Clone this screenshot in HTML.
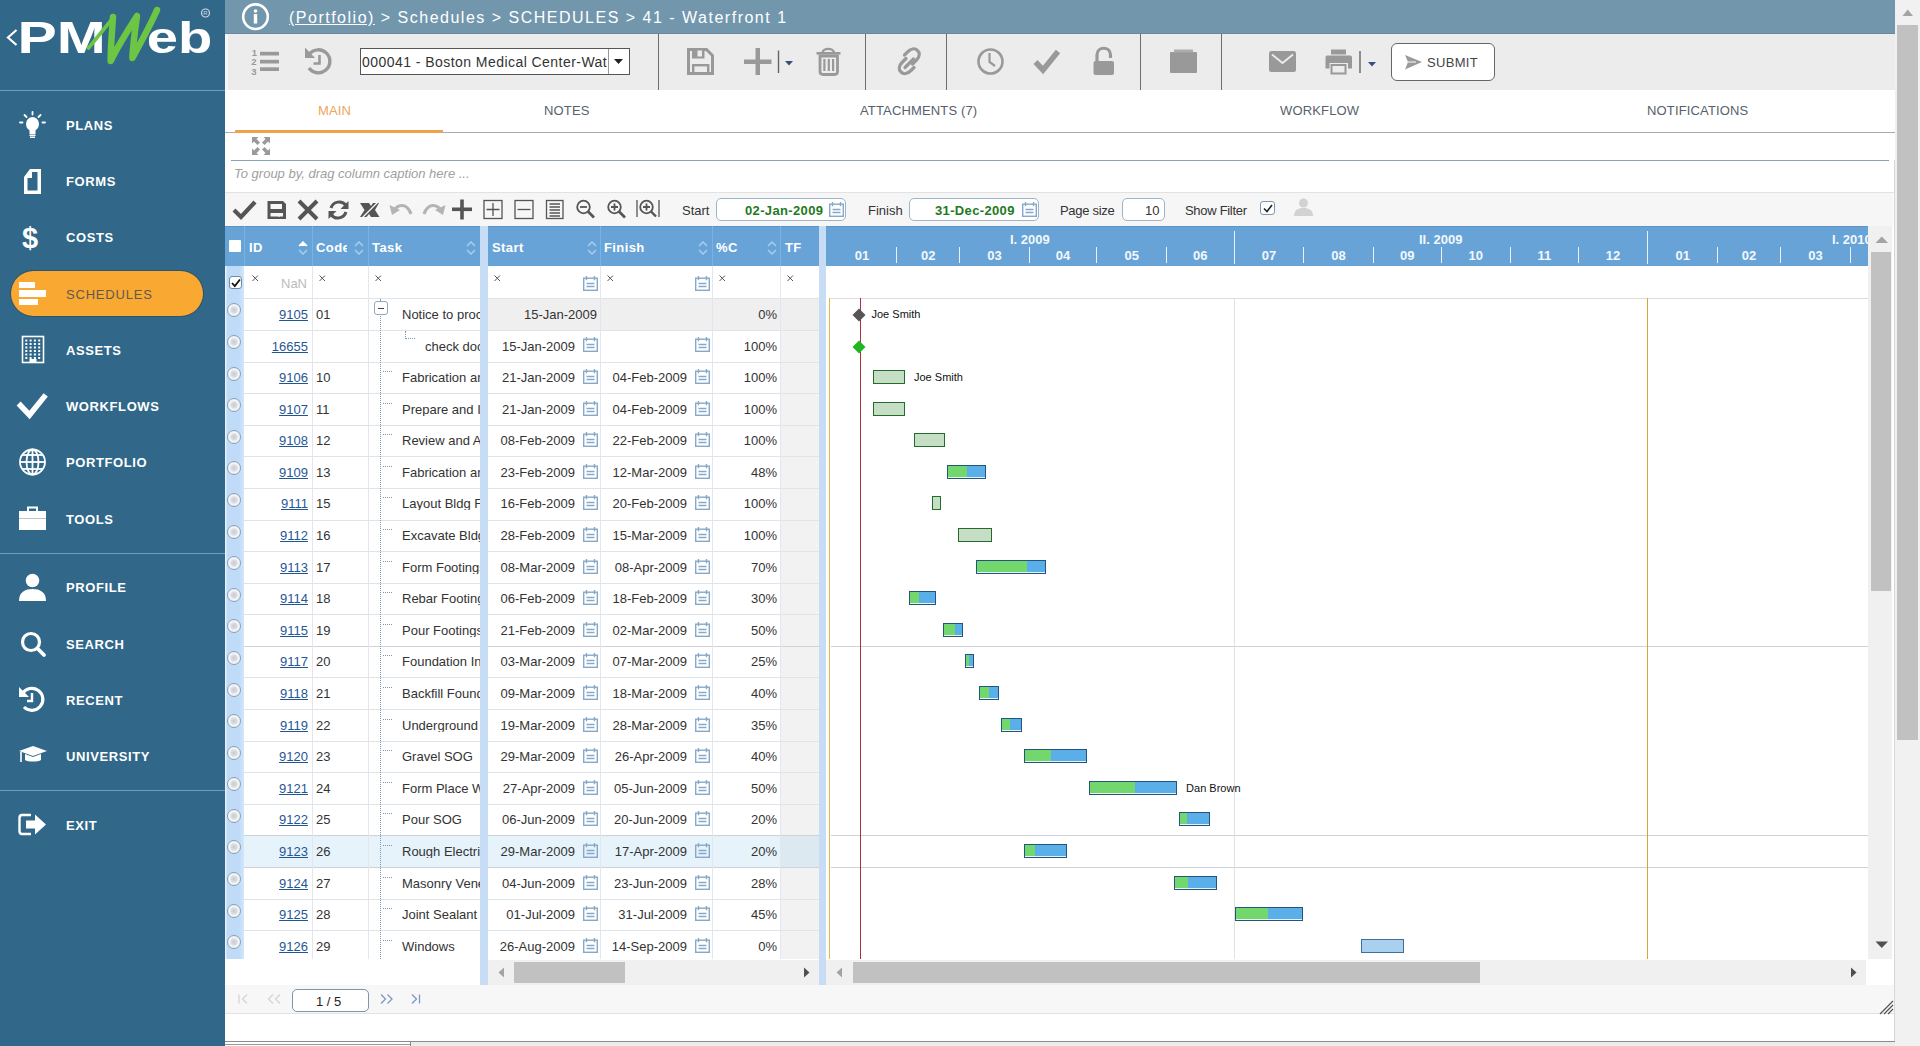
<!DOCTYPE html><html><head><meta charset="utf-8"><style>

*{box-sizing:border-box}
body{margin:0;width:1920px;height:1046px;overflow:hidden;position:relative;background:#fff;font-family:"Liberation Sans", sans-serif;}
.a{position:absolute}
.t{position:absolute;white-space:nowrap;line-height:1}
svg{position:absolute;overflow:visible}
.sbt{position:absolute;left:66px;color:#fff;font-size:13px;font-weight:bold;letter-spacing:0.6px;white-space:nowrap;line-height:1}
.tab{position:absolute;top:104px;font-size:13px;color:#56616c;letter-spacing:0.15px;white-space:nowrap;line-height:1}
.gt{position:absolute;font-size:13px;color:#333;white-space:nowrap;line-height:1}
.hd{position:absolute;top:241px;font-size:13px;color:#fff;font-weight:bold;letter-spacing:0.4px;white-space:nowrap;line-height:1}
.lnk{color:#1f5796;text-decoration:underline}

</style></head><body>
<div class="a" style="left:0;top:0;width:225px;height:1046px;background:#316789"></div>
<svg style="left:0;top:0" width="225" height="90" viewBox="0 0 225 90">
<path d="M16.5 30 L8 37.5 L16.5 45" fill="none" stroke="#fff" stroke-width="2.2"/>
<g fill="#fff">
<text x="0" y="0" transform="translate(17.4,52.7) scale(1.35,1)" font-family="Liberation Sans" font-weight="bold" font-size="43.6">PM</text>
<text x="0" y="0" transform="translate(146.8,52.7) scale(1.29,1.0)" font-family="Liberation Sans" font-weight="bold" font-size="43.5">eb</text>
</g>
<path d="M88.5 48 L113 18" fill="none" stroke="#6cc644" stroke-width="3.6" stroke-linecap="round"/>
<path d="M113 17 C112 32 110.5 48 110.7 61 C118 46 128 30 137 16 C135 30 133 45 132.4 58 C141 42 150 26 157 10" fill="none" stroke="#6cc644" stroke-width="6.5" stroke-linecap="round" stroke-linejoin="round"/>
<circle cx="205.5" cy="13" r="4" fill="none" stroke="#cfdde8" stroke-width="1.2"/>
<text x="203.3" y="15.3" font-size="6" fill="#cfdde8" font-family="Liberation Sans">R</text>
</svg>
<div class="a" style="left:0;top:90px;width:225px;height:1px;background:#6f9dbf"></div>
<div class="a" style="left:0;top:553px;width:225px;height:1px;background:#6f9dbf"></div>
<div class="a" style="left:0;top:790px;width:225px;height:1px;background:#6f9dbf"></div>
<div class="a" style="left:11px;top:271px;width:192px;height:45px;border-radius:23px;background:#f9a832;box-shadow:0 0 0 1px rgba(45,70,75,0.55)"></div>
<div class="sbt" style="top:119px;color:#fff">PLANS</div>
<div class="sbt" style="top:175px;color:#fff">FORMS</div>
<div class="sbt" style="top:231px;color:#fff">COSTS</div>
<div class="sbt" style="top:288px;color:#5e5a50;font-weight:normal;letter-spacing:0.8px">SCHEDULES</div>
<div class="sbt" style="top:344px;color:#fff">ASSETS</div>
<div class="sbt" style="top:400px;color:#fff">WORKFLOWS</div>
<div class="sbt" style="top:456px;color:#fff">PORTFOLIO</div>
<div class="sbt" style="top:513px;color:#fff">TOOLS</div>
<div class="sbt" style="top:581px;color:#fff">PROFILE</div>
<div class="sbt" style="top:638px;color:#fff">SEARCH</div>
<div class="sbt" style="top:694px;color:#fff">RECENT</div>
<div class="sbt" style="top:750px;color:#fff">UNIVERSITY</div>
<div class="sbt" style="top:819px;color:#fff">EXIT</div>
<svg style="left:0;top:0" width="60" height="860">
<!-- plans bulb -->
<g fill="#fff">
<ellipse cx="32.5" cy="124" rx="6.5" ry="7"/>
<rect x="29.5" y="129" width="6" height="5"/>
<rect x="29.5" y="134.5" width="6" height="1.5"/>
<rect x="30" y="136.5" width="5" height="1.5"/>
</g>
<g stroke="#fff" stroke-width="1.8" stroke-linecap="round">
<line x1="32.5" y1="112" x2="32.5" y2="114.5"/><line x1="24.5" y1="115" x2="26.5" y2="117"/><line x1="40.5" y1="115" x2="38.5" y2="117"/>
<line x1="20" y1="122.5" x2="22.5" y2="122.5"/><line x1="42.5" y1="122.5" x2="45" y2="122.5"/>
</g>
<!-- forms -->
<path d="M24 177 L30 169 L41 169 L41 194 L24 194 Z M27.5 178 L27.5 190.5 L37.5 190.5 L37.5 172 L32 172 L32 178 Z" fill="#fff" fill-rule="evenodd"/>
<!-- costs $ -->
<text x="22" y="248" font-family="Liberation Sans" font-weight="bold" font-size="29" fill="#fff">$</text>
<!-- schedules -->
<rect x="19" y="282" width="16" height="6" fill="#fff"/>
<rect x="19" y="290" width="27" height="7" fill="#fff"/>
<rect x="19" y="299" width="19" height="6" fill="#fff"/>
<!-- assets building -->
<rect x="22.5" y="336.5" width="21" height="26" fill="none" stroke="#fff" stroke-width="1.6"/>
<g fill="#fff">

<rect x="25.3" y="339.5" width="2" height="2"/>
<rect x="29.6" y="339.5" width="2" height="2"/>
<rect x="33.9" y="339.5" width="2" height="2"/>
<rect x="38.2" y="339.5" width="2" height="2"/>
<rect x="25.3" y="343.0" width="2" height="2"/>
<rect x="29.6" y="343.0" width="2" height="2"/>
<rect x="33.9" y="343.0" width="2" height="2"/>
<rect x="38.2" y="343.0" width="2" height="2"/>
<rect x="25.3" y="346.5" width="2" height="2"/>
<rect x="29.6" y="346.5" width="2" height="2"/>
<rect x="33.9" y="346.5" width="2" height="2"/>
<rect x="38.2" y="346.5" width="2" height="2"/>
<rect x="25.3" y="350.0" width="2" height="2"/>
<rect x="29.6" y="350.0" width="2" height="2"/>
<rect x="33.9" y="350.0" width="2" height="2"/>
<rect x="38.2" y="350.0" width="2" height="2"/>
<rect x="25.3" y="353.5" width="2" height="2"/>
<rect x="29.6" y="353.5" width="2" height="2"/>
<rect x="33.9" y="353.5" width="2" height="2"/>
<rect x="38.2" y="353.5" width="2" height="2"/>
<rect x="25.3" y="357.0" width="2" height="2"/>
<rect x="29.6" y="357.0" width="2" height="2"/>
<rect x="33.9" y="357.0" width="2" height="2"/>
<rect x="38.2" y="357.0" width="2" height="2"/>
<rect x="29.5" y="359" width="7" height="4"/>
</g>
<!-- workflows check -->
<path d="M20.5 405.5 L29.5 415 L44 397" fill="none" stroke="#fff" stroke-width="5.5" stroke-linecap="square"/>
<!-- portfolio globe -->
<g fill="none" stroke="#fff" stroke-width="1.8">
<circle cx="32.5" cy="462" r="12.5"/>
<ellipse cx="32.5" cy="462" rx="6" ry="12.5"/>
<line x1="32.5" y1="449.5" x2="32.5" y2="474.5"/>
<line x1="20" y1="462" x2="45" y2="462"/>
<line x1="22" y1="455" x2="43" y2="455"/>
<line x1="22" y1="469" x2="43" y2="469"/>
</g>
<!-- tools briefcase -->
<path d="M28 511 V507.5 H37 V511" fill="none" stroke="#fff" stroke-width="2"/>
<rect x="19" y="511" width="27" height="19" fill="#fff"/>
<rect x="19" y="518" width="27" height="1" fill="#b9c6d0"/>
<!-- profile -->
<circle cx="32.5" cy="580.5" r="6.8" fill="#fff"/>
<path d="M19 601 C19 592 25 589 32.5 589 C40 589 46 592 46 601 Z" fill="#fff"/>
<!-- search -->
<circle cx="31" cy="642" r="8.5" fill="none" stroke="#fff" stroke-width="3.2"/>
<line x1="37.5" y1="648.5" x2="44" y2="655" stroke="#fff" stroke-width="3.8" stroke-linecap="round"/>
<!-- recent -->
<path d="M22.5 693.5 A11 11 0 1 1 24 707" fill="none" stroke="#fff" stroke-width="3.2"/>
<path d="M19 687 L19 697 L29 697 Z" fill="#fff"/>
<path d="M32 693 V701 H27" fill="none" stroke="#fff" stroke-width="2.4"/>
<!-- university cap -->
<path d="M19 751 L33 746 L47 751 L33 756 Z" fill="#fff"/>
<path d="M25 754 V760 C28 762 38 762 41 760 V754 L33 757 Z" fill="#fff"/>
<line x1="21" y1="752" x2="21" y2="762" stroke="#fff" stroke-width="1.6"/>
<!-- exit -->
<path d="M31 815 H22 C20 815 19.5 816 19.5 818 V831 C19.5 833 20 834 22 834 H31" fill="none" stroke="#fff" stroke-width="2.4"/>
<path d="M26 820.5 H35 V814.5 L46 824.5 L35 834.5 V828.5 H26 Z" fill="#fff"/>
</svg>
<div class="a" style="left:225px;top:0;width:1670px;height:34px;background:#7297ad;border-bottom:1px solid #658a9f"></div>
<svg style="left:240px;top:2px" width="32" height="32"><circle cx="15.5" cy="14.7" r="12.3" fill="none" stroke="#fff" stroke-width="2.6"/><circle cx="15.5" cy="9" r="1.8" fill="#fff"/><rect x="13.8" y="12" width="3.4" height="9.5" fill="#fff"/></svg>
<div class="t" style="left:289px;top:10px;font-size:16px;color:#fff;letter-spacing:1.5px"><span style="text-decoration:underline">(Portfolio)</span> &gt; Schedules &gt; SCHEDULES &gt; 41 - Waterfront 1</div>
<div class="a" style="left:225px;top:34px;width:1670px;height:56px;background:#ececec"></div>
<div class="a" style="left:225px;top:34px;width:3px;height:56px;background:#f4f8fb"></div>
<div class="a" style="left:658px;top:34px;width:1px;height:56px;background:#6e6e6e"></div>
<div class="a" style="left:865px;top:34px;width:1px;height:56px;background:#6e6e6e"></div>
<div class="a" style="left:946px;top:34px;width:1px;height:56px;background:#6e6e6e"></div>
<div class="a" style="left:1140px;top:34px;width:1px;height:56px;background:#6e6e6e"></div>
<div class="a" style="left:1221px;top:34px;width:1px;height:56px;background:#6e6e6e"></div>
<div class="a" style="left:360px;top:48px;width:270px;height:27px;border:1px solid #555;background:#fff"></div>
<div class="a" style="left:608px;top:49px;width:1px;height:25px;background:#999"></div>
<svg style="left:613px;top:58px" width="12" height="8"><path d="M1 1 H10 L5.5 6 Z" fill="#222"/></svg>
<div class="t" style="left:362px;top:55px;font-size:14px;color:#333;letter-spacing:0.45px">000041 - Boston Medical Center-Wat</div>
<svg style="left:0;top:0" width="1500" height="90">
<!-- list 123 -->
<g fill="#999">
<rect x="260" y="51.8" width="19" height="3.7"/><rect x="260" y="59.8" width="19" height="3.7"/><rect x="260" y="67.3" width="19" height="3.7"/>
<text x="251.8" y="56.3" font-size="9.5" font-family="Liberation Sans" font-weight="bold">1</text>
<text x="251.3" y="65.2" font-size="9.5" font-family="Liberation Sans" font-weight="bold">2</text>
<text x="251.3" y="74.5" font-size="9.5" font-family="Liberation Sans" font-weight="bold">3</text>
</g>
<!-- history -->
<path d="M309.5 54 A11.5 11.5 0 1 1 309 68" fill="none" stroke="#999" stroke-width="3.4"/>
<path d="M305 47.5 L305 58 L315 58 Z" fill="#999"/>
<path d="M319.5 55 V63.5 H313.5" fill="none" stroke="#999" stroke-width="2.6"/>
<!-- save -->
<path d="M688.5 49.5 H706.5 L712.5 55.5 V73.5 H688.5 Z" fill="none" stroke="#999" stroke-width="3"/>
<rect x="692" y="49" width="12.5" height="9.5" fill="#999"/>
<rect x="697.5" y="50.5" width="4.5" height="6" fill="#ececec"/>
<rect x="693.2" y="65.2" width="15" height="8.3" fill="none" stroke="#999" stroke-width="2.4"/>
<!-- plus -->
<rect x="744" y="59.5" width="27.5" height="4.5" fill="#999"/><rect x="755.5" y="48" width="4.5" height="27" fill="#999"/>
<rect x="777.8" y="50.5" width="1.4" height="22.5" fill="#666"/>
<path d="M785 61 H793 L789 65.5 Z" fill="#35507f"/>
<!-- trash -->
<path d="M816.5 53.3 H840.5" stroke="#999" stroke-width="2.6"/>
<path d="M822.5 53 C822.5 47.5 834 47.5 834 53" fill="none" stroke="#999" stroke-width="2.4"/>
<path d="M820 56 H837.5 V71.5 C837.5 73.5 836.5 74.5 834.5 74.5 H823 C821 74.5 820 73.5 820 71.5 Z" fill="none" stroke="#999" stroke-width="2.8"/>
<rect x="823.3" y="59" width="2.2" height="12" fill="#999"/><rect x="827.7" y="59" width="2.2" height="12" fill="#999"/><rect x="832" y="59" width="2.2" height="12" fill="#999"/>
<!-- link -->
<g fill="none" stroke="#999" stroke-width="3.2" stroke-linecap="round">
<path d="M906 58.5 L902 62.5 C898.5 66 898.5 70 901 72 C903.5 74.5 907.5 74 911 70.5 L914 67.5"/>
<path d="M912.5 64 L916.5 60 C920 56.5 920 52.5 917.5 50.5 C915 48 911 48.5 907.5 52 L904.5 55"/>
<path d="M905 67.5 L913.5 59"/>
</g>
<!-- clock -->
<circle cx="990.5" cy="61.5" r="12" fill="none" stroke="#999" stroke-width="2.6"/>
<path d="M989.5 53 V62 L995 66" fill="none" stroke="#999" stroke-width="2.2"/>
<!-- check -->
<path d="M1035.5 62 L1043 70 L1058 51.5" fill="none" stroke="#999" stroke-width="5.5"/>
<!-- lock -->
<path d="M1097 61 V55 C1097 46 1110.5 46 1110.5 55 V58" fill="none" stroke="#999" stroke-width="3.2"/>
<rect x="1093.5" y="61" width="20.5" height="14" rx="2" fill="#999"/>
<!-- box -->
<rect x="1170" y="52" width="27" height="21" rx="1" fill="#999"/>
<rect x="1174" y="49.5" width="19" height="3" fill="#acacac"/>
<!-- mail -->
<rect x="1269" y="51" width="27" height="21" rx="2.5" fill="#999"/>
<path d="M1272 54.5 L1282.5 63 L1293 54.5" fill="none" stroke="#ececec" stroke-width="1.8"/>
<!-- printer -->
<rect x="1331" y="49.5" width="15" height="5" fill="#999"/>
<path d="M1325.5 57.5 C1325.5 56 1326.5 55.5 1328 55.5 H1349.5 C1351 55.5 1352 56 1352 57.5 V68.5 H1348 V63 H1329.5 V68.5 H1325.5 Z" fill="#999"/>
<rect x="1331.5" y="65" width="14" height="8.5" fill="none" stroke="#999" stroke-width="2"/>
<rect x="1359.3" y="51" width="1.4" height="22" fill="#666"/>
<path d="M1368 62 H1376 L1372 66.5 Z" fill="#35507f"/>
</svg>
<div class="a" style="left:1391px;top:43px;width:104px;height:38px;border:1px solid #666;border-radius:6px;background:#fff"></div>
<svg style="left:1404px;top:54px" width="20" height="18"><path d="M1 1 L18 8 L1 15.5 L4 8 Z" fill="#9a9a9a"/><path d="M4 8 H12" stroke="#fff" stroke-width="1"/></svg>
<div class="t" style="left:1427px;top:56px;font-size:13px;color:#444;letter-spacing:0.3px">SUBMIT</div>
<div class="a" style="left:225px;top:132px;width:1671px;height:1px;background:#a9a9a9"></div>
<div class="a" style="left:235px;top:130px;width:208px;height:2.5px;background:#f0a14d"></div>
<div class="tab" style="left:318px;color:#eda55c">MAIN</div>
<div class="tab" style="left:544px">NOTES</div>
<div class="tab" style="left:860px">ATTACHMENTS (7)</div>
<div class="tab" style="left:1280px">WORKFLOW</div>
<div class="tab" style="left:1647px">NOTIFICATIONS</div>
<svg style="left:252px;top:137px" width="20" height="20"><g fill="#9a9a9a">
<path d="M0 0 H6.5 L4.5 2 L8 5.5 L5.5 8 L2 4.5 L0 6.5 Z"/>
<path d="M18 0 H11.5 L13.5 2 L10 5.5 L12.5 8 L16 4.5 L18 6.5 Z"/>
<path d="M0 18 H6.5 L4.5 16 L8 12.5 L5.5 10 L2 13.5 L0 11.5 Z"/>
<path d="M18 18 H11.5 L13.5 16 L10 12.5 L12.5 10 L16 13.5 L18 11.5 Z"/>
</g></svg>
<div class="a" style="left:231px;top:160px;width:1658px;height:1.3px;background:#86a3b8"></div>
<div class="a" style="left:1894px;top:160px;width:1px;height:882px;background:#d6d6d6"></div>
<div class="t" style="left:234px;top:167px;font-size:13px;color:#a0a0a0;font-style:italic">To group by, drag column caption here ...</div>
<div class="a" style="left:225px;top:192px;width:1669px;height:1px;background:#e2e2e2"></div>
<div class="a" style="left:225px;top:193px;width:1668px;height:33px;background:#f6f6f6"></div>
<svg style="left:0;top:0" width="1320" height="230">
<path d="M234 210 L241 217 L255 202" fill="none" stroke="#555" stroke-width="4.2"/>
<path d="M267.5 201 H283 L286 204 V219 H267.5 Z M270.5 204 V209 H282 V204 Z M270.5 213 V216.5 H283 V213 Z" fill="#555" fill-rule="evenodd"/>
<rect x="278" y="213" width="2" height="3.5" fill="#f6f6f6"/>
<path d="M299 201 L317 219 M317 201 L299 219" stroke="#555" stroke-width="4"/>
<path d="M346 205.5 A8.5 8.5 0 0 0 331 208" fill="none" stroke="#555" stroke-width="3"/>
<path d="M348.5 201 V209 H340.5 Z" fill="#555"/>
<path d="M331 214.5 A8.5 8.5 0 0 0 346 212" fill="none" stroke="#555" stroke-width="3"/>
<path d="M328.5 219 V211 H336.5 Z" fill="#555"/>
<path d="M360 203 H369 L371 206 L373 203 H379 L375 210 L379.5 217 H371 L369 214 L366.5 217 H360 L364.5 210 Z" fill="#555"/>
<path d="M362 218 L378 202" stroke="#f6f6f6" stroke-width="1.3"/>
<path d="M393 212 C398 203 407 203 411 214" fill="none" stroke="#b4b4b4" stroke-width="3.2"/>
<path d="M389.5 205 L392 215 L400 210 Z" fill="#b4b4b4"/>
<path d="M442 212 C437 203 428 203 424 214" fill="none" stroke="#b4b4b4" stroke-width="3.2"/>
<path d="M445.5 205 L443 215 L435 210 Z" fill="#b4b4b4"/>
<rect x="452" y="207.5" width="20" height="3.6" fill="#555"/><rect x="460.2" y="199.5" width="3.6" height="20" fill="#555"/>
<g fill="none" stroke="#555" stroke-width="1.3">
<rect x="484" y="200.5" width="18" height="18"/><path d="M486.5 209.5 H499.5 M493 203 V216"/>
<rect x="515" y="200.5" width="18" height="18"/><path d="M517.5 209.5 H530.5"/>
<rect x="546.5" y="200.5" width="16.5" height="18"/><path d="M549.5 204 H560 M549.5 207 H560 M549.5 210 H560 M549.5 213 H560 M549.5 216 H560"/>
</g>
<g fill="none" stroke="#555" stroke-width="1.8">
<circle cx="583.5" cy="207" r="6.3"/><path d="M588 211.5 L594 217.5" stroke-width="2.6"/><path d="M580 207 H587"/>
<circle cx="614.5" cy="207" r="6.3"/><path d="M619 211.5 L625 217.5" stroke-width="2.6"/><path d="M611 207 H618 M614.5 203.5 V210.5"/>
<circle cx="646.5" cy="207" r="6.3"/><path d="M651 211.5 L656 216.5" stroke-width="2.4"/><path d="M643 207 H650 M646.5 203.5 V210.5"/>
<path d="M637 200 V217 M659 200 V217" stroke-width="1.3"/>
</g>
</svg>
<div class="gt" style="left:682px;top:204px">Start</div>
<div class="a" style="left:716px;top:198px;width:130px;height:23px;border:1px solid #9fb4c7;border-radius:5px;background:#fff"></div>
<div class="gt" style="left:745px;top:204px;color:#1e7a1e;font-weight:bold;letter-spacing:0.35px">02-Jan-2009</div>
<div class="gt" style="left:868px;top:204px">Finish</div>
<div class="a" style="left:909px;top:198px;width:130px;height:23px;border:1px solid #9fb4c7;border-radius:5px;background:#fff"></div>
<div class="gt" style="left:935px;top:204px;color:#1e7a1e;font-weight:bold;letter-spacing:0.35px">31-Dec-2009</div>
<div class="gt" style="left:1060px;top:204px;letter-spacing:-0.3px">Page size</div>
<div class="a" style="left:1122px;top:198px;width:43px;height:23px;border:1px solid #9fb4c7;border-radius:5px;background:#fff"></div>
<div class="gt" style="left:1145px;top:204px">10</div>
<div class="gt" style="left:1185px;top:204px;letter-spacing:-0.3px">Show Filter</div>
<div class="a" style="left:1260px;top:201px;width:15px;height:14px;border:1px solid #7e97ae;border-radius:3px;background:#fff"></div>
<svg style="left:1262px;top:203px" width="12" height="11"><path d="M2 5.5 L5 8.5 L10 2" fill="none" stroke="#222" stroke-width="1.6"/></svg>
<svg style="left:1294px;top:198px" width="19" height="18"><circle cx="9.5" cy="5" r="4.5" fill="#d2d2d2"/><path d="M0 18 C0 12 4 10 9.5 10 C15 10 19 12 19 18 Z" fill="#d2d2d2"/></svg>
<svg style="left:829px;top:202px" width="15" height="15"><g fill="none" stroke="#86a9c9" stroke-width="1.4"><rect x="0.7" y="2.2" width="13.6" height="12.1"/><path d="M3.5 0 V4.2 M11.5 0 V4.2 M3.5 7.5 H11.5 M3.5 10.5 H11.5"/></g></svg>
<svg style="left:1022px;top:202px" width="15" height="15"><g fill="none" stroke="#86a9c9" stroke-width="1.4"><rect x="0.7" y="2.2" width="13.6" height="12.1"/><path d="M3.5 0 V4.2 M11.5 0 V4.2 M3.5 7.5 H11.5 M3.5 10.5 H11.5"/></g></svg>
<div class="a" style="left:225px;top:226px;width:255px;height:40px;background:#68a3d7;border-top:1px solid #5f93c4"></div>
<div class="a" style="left:488px;top:226px;width:331px;height:40px;background:#68a3d7;border-top:1px solid #5f93c4"></div>
<div class="a" style="left:826px;top:226px;width:1042px;height:40px;background:#68a3d7;border-top:1px solid #5f93c4"></div>
<div class="a" style="left:244px;top:226px;width:1px;height:40px;background:#7cb1e0"></div>
<div class="a" style="left:312px;top:226px;width:1px;height:40px;background:#7cb1e0"></div>
<div class="a" style="left:368px;top:226px;width:1px;height:40px;background:#7cb1e0"></div>
<div class="a" style="left:600px;top:226px;width:1px;height:40px;background:#7cb1e0"></div>
<div class="a" style="left:712px;top:226px;width:1px;height:40px;background:#7cb1e0"></div>
<div class="a" style="left:780px;top:226px;width:1px;height:40px;background:#7cb1e0"></div>
<div class="a" style="left:229px;top:240px;width:12px;height:12px;background:#fff;border-radius:1px"></div>
<div class="a" style="left:313px;top:226px;width:34px;height:40px;overflow:hidden"><div class="hd" style="left:3px;top:15px">Code</div></div>
<div class="hd" style="left:249px">ID</div>
<div class="hd" style="left:372px">Task</div>
<div class="hd" style="left:492px">Start</div>
<div class="hd" style="left:604px">Finish</div>
<div class="hd" style="left:716px">%C</div>
<div class="hd" style="left:785px">TF</div>
<svg style="left:298px;top:239.5px" width="10" height="16"><path d="M1 6 L5 2 L9 6" fill="#fff" stroke="#fff" stroke-width="1.5"/><path d="M1 10 L5 14 L9 10" fill="none" stroke="#a9cdef" stroke-width="1.5"/></svg>
<svg style="left:354px;top:239.5px" width="10" height="16"><path d="M1 6 L5 2 L9 6" fill="none" stroke="#a9cdef" stroke-width="1.5"/><path d="M1 10 L5 14 L9 10" fill="none" stroke="#a9cdef" stroke-width="1.5"/></svg>
<svg style="left:466px;top:239.5px" width="10" height="16"><path d="M1 6 L5 2 L9 6" fill="none" stroke="#a9cdef" stroke-width="1.5"/><path d="M1 10 L5 14 L9 10" fill="none" stroke="#a9cdef" stroke-width="1.5"/></svg>
<svg style="left:587px;top:239.5px" width="10" height="16"><path d="M1 6 L5 2 L9 6" fill="none" stroke="#a9cdef" stroke-width="1.5"/><path d="M1 10 L5 14 L9 10" fill="none" stroke="#a9cdef" stroke-width="1.5"/></svg>
<svg style="left:698px;top:239.5px" width="10" height="16"><path d="M1 6 L5 2 L9 6" fill="none" stroke="#a9cdef" stroke-width="1.5"/><path d="M1 10 L5 14 L9 10" fill="none" stroke="#a9cdef" stroke-width="1.5"/></svg>
<svg style="left:767px;top:239.5px" width="10" height="16"><path d="M1 6 L5 2 L9 6" fill="none" stroke="#a9cdef" stroke-width="1.5"/><path d="M1 10 L5 14 L9 10" fill="none" stroke="#a9cdef" stroke-width="1.5"/></svg>
<div class="a" style="left:480px;top:226px;width:8px;height:759px;background:#c6ddf5"></div>
<div class="a" style="left:819px;top:226px;width:7px;height:759px;background:#c6ddf5"></div>
<div class="a" style="left:225px;top:266px;width:19px;height:693px;background:linear-gradient(90deg,#e4f0fc 0,#e4f0fc 1px,#c0dbf7 2px,#c0dbf7 14px,#d2e7fb 19px)"></div>
<div class="a" style="left:229px;top:276px;width:13px;height:13px;border:1px solid #6f8aa6;border-radius:3px;background:#fff"></div>
<svg style="left:230px;top:278px" width="12" height="10"><path d="M2 5 L4.8 8 L10 1.5" fill="none" stroke="#111" stroke-width="1.8"/></svg>
<svg style="left:251.5px;top:274.5px" width="7" height="7"><path d="M0.5 0.5 L6 6 M6 0.5 L0.5 6" stroke="#555" stroke-width="1"/></svg>
<svg style="left:318.5px;top:274.5px" width="7" height="7"><path d="M0.5 0.5 L6 6 M6 0.5 L0.5 6" stroke="#555" stroke-width="1"/></svg>
<svg style="left:374.5px;top:274.5px" width="7" height="7"><path d="M0.5 0.5 L6 6 M6 0.5 L0.5 6" stroke="#555" stroke-width="1"/></svg>
<svg style="left:493.5px;top:274.5px" width="7" height="7"><path d="M0.5 0.5 L6 6 M6 0.5 L0.5 6" stroke="#555" stroke-width="1"/></svg>
<svg style="left:606.5px;top:274.5px" width="7" height="7"><path d="M0.5 0.5 L6 6 M6 0.5 L0.5 6" stroke="#555" stroke-width="1"/></svg>
<svg style="left:718.5px;top:274.5px" width="7" height="7"><path d="M0.5 0.5 L6 6 M6 0.5 L0.5 6" stroke="#555" stroke-width="1"/></svg>
<svg style="left:786.5px;top:274.5px" width="7" height="7"><path d="M0.5 0.5 L6 6 M6 0.5 L0.5 6" stroke="#555" stroke-width="1"/></svg>
<div class="gt" style="left:281px;top:277px;color:#bbb">NaN</div>
<svg style="left:583px;top:276px" width="15" height="15"><g fill="none" stroke="#86a9c9" stroke-width="1.4"><rect x="0.7" y="2.2" width="13.6" height="12.1"/><path d="M3.5 0 V4.2 M11.5 0 V4.2 M3.5 7.5 H11.5 M3.5 10.5 H11.5"/></g></svg>
<svg style="left:695px;top:276px" width="15" height="15"><g fill="none" stroke="#86a9c9" stroke-width="1.4"><rect x="0.7" y="2.2" width="13.6" height="12.1"/><path d="M3.5 0 V4.2 M11.5 0 V4.2 M3.5 7.5 H11.5 M3.5 10.5 H11.5"/></g></svg>
<div class="a" style="left:488px;top:299.40px;width:331px;height:30.59px;background:#efefef"></div>
<div class="a" style="left:781px;top:329.99px;width:38px;height:629.01px;background:#f2f2f2"></div>
<div class="a" style="left:244px;top:836.43px;width:236px;height:30.59px;background:#e6f3fb"></div>
<div class="a" style="left:488px;top:836.43px;width:293px;height:30.59px;background:#e6f3fb"></div>
<div class="a" style="left:781px;top:836.43px;width:38px;height:30.59px;background:#dde9f1"></div>
<div class="a" style="left:244px;top:298.40px;width:236px;height:1px;background:#dfe3ea"></div>
<div class="a" style="left:488px;top:298.40px;width:331px;height:1px;background:#dfe3ea"></div>
<div class="a" style="left:244px;top:329.99px;width:236px;height:1px;background:#dfe3ea"></div>
<div class="a" style="left:488px;top:329.99px;width:331px;height:1px;background:#dfe3ea"></div>
<div class="a" style="left:244px;top:361.58px;width:236px;height:1px;background:#dfe3ea"></div>
<div class="a" style="left:488px;top:361.58px;width:331px;height:1px;background:#dfe3ea"></div>
<div class="a" style="left:244px;top:393.17px;width:236px;height:1px;background:#dfe3ea"></div>
<div class="a" style="left:488px;top:393.17px;width:331px;height:1px;background:#dfe3ea"></div>
<div class="a" style="left:244px;top:424.76px;width:236px;height:1px;background:#dfe3ea"></div>
<div class="a" style="left:488px;top:424.76px;width:331px;height:1px;background:#dfe3ea"></div>
<div class="a" style="left:244px;top:456.35px;width:236px;height:1px;background:#dfe3ea"></div>
<div class="a" style="left:488px;top:456.35px;width:331px;height:1px;background:#dfe3ea"></div>
<div class="a" style="left:244px;top:487.94px;width:236px;height:1px;background:#dfe3ea"></div>
<div class="a" style="left:488px;top:487.94px;width:331px;height:1px;background:#dfe3ea"></div>
<div class="a" style="left:244px;top:519.53px;width:236px;height:1px;background:#dfe3ea"></div>
<div class="a" style="left:488px;top:519.53px;width:331px;height:1px;background:#dfe3ea"></div>
<div class="a" style="left:244px;top:551.12px;width:236px;height:1px;background:#dfe3ea"></div>
<div class="a" style="left:488px;top:551.12px;width:331px;height:1px;background:#dfe3ea"></div>
<div class="a" style="left:244px;top:582.71px;width:236px;height:1px;background:#dfe3ea"></div>
<div class="a" style="left:488px;top:582.71px;width:331px;height:1px;background:#dfe3ea"></div>
<div class="a" style="left:244px;top:614.30px;width:236px;height:1px;background:#dfe3ea"></div>
<div class="a" style="left:488px;top:614.30px;width:331px;height:1px;background:#dfe3ea"></div>
<div class="a" style="left:244px;top:645.89px;width:236px;height:1px;background:#cfd3d9"></div>
<div class="a" style="left:488px;top:645.89px;width:331px;height:1px;background:#cfd3d9"></div>
<div class="a" style="left:244px;top:677.48px;width:236px;height:1px;background:#dfe3ea"></div>
<div class="a" style="left:488px;top:677.48px;width:331px;height:1px;background:#dfe3ea"></div>
<div class="a" style="left:244px;top:709.07px;width:236px;height:1px;background:#dfe3ea"></div>
<div class="a" style="left:488px;top:709.07px;width:331px;height:1px;background:#dfe3ea"></div>
<div class="a" style="left:244px;top:740.66px;width:236px;height:1px;background:#dfe3ea"></div>
<div class="a" style="left:488px;top:740.66px;width:331px;height:1px;background:#dfe3ea"></div>
<div class="a" style="left:244px;top:772.25px;width:236px;height:1px;background:#dfe3ea"></div>
<div class="a" style="left:488px;top:772.25px;width:331px;height:1px;background:#dfe3ea"></div>
<div class="a" style="left:244px;top:803.84px;width:236px;height:1px;background:#dfe3ea"></div>
<div class="a" style="left:488px;top:803.84px;width:331px;height:1px;background:#dfe3ea"></div>
<div class="a" style="left:244px;top:835.43px;width:236px;height:1px;background:#cfd3d9"></div>
<div class="a" style="left:488px;top:835.43px;width:331px;height:1px;background:#cfd3d9"></div>
<div class="a" style="left:244px;top:867.02px;width:236px;height:1px;background:#cfd3d9"></div>
<div class="a" style="left:488px;top:867.02px;width:331px;height:1px;background:#cfd3d9"></div>
<div class="a" style="left:244px;top:898.61px;width:236px;height:1px;background:#dfe3ea"></div>
<div class="a" style="left:488px;top:898.61px;width:331px;height:1px;background:#dfe3ea"></div>
<div class="a" style="left:244px;top:930.20px;width:236px;height:1px;background:#dfe3ea"></div>
<div class="a" style="left:488px;top:930.20px;width:331px;height:1px;background:#dfe3ea"></div>
<div class="a" style="left:312px;top:266px;width:1px;height:693px;background:#e4e6ee"></div>
<div class="a" style="left:368px;top:266px;width:1px;height:693px;background:#e4e6ee"></div>
<div class="a" style="left:600px;top:266px;width:1px;height:693px;background:#e4e6ee"></div>
<div class="a" style="left:712px;top:266px;width:1px;height:693px;background:#e4e6ee"></div>
<div class="a" style="left:780px;top:266px;width:1px;height:693px;background:#e4e6ee"></div>
<div class="a" style="left:380px;top:299.4px;width:0;height:659.6px;border-left:1px dotted #7d99b5"></div>
<div class="a" style="left:374px;top:301.4px;width:14px;height:14px;border:1px solid #8fa9bf;border-radius:3px;background:#fff"></div>
<div class="a" style="left:378px;top:307.7px;width:6px;height:1.6px;background:#444"></div>
<div class="a" style="left:227px;top:303.4px;width:14px;height:14px;border-radius:50%;border:1.6px solid #8d9fb3;background:radial-gradient(circle at 50% 50%,#c9ced4 0,#d6dadf 30%,#f4f6f8 55%,#e2e6ea 100%)"></div>
<div class="gt lnk" style="right:1612px;top:307.9px">9105</div>
<div class="gt" style="left:316px;top:307.9px">01</div>
<div class="gt" style="left:402px;top:307.9px;width:78px;overflow:hidden">Notice to proceed</div>
<div class="gt" style="right:1323px;top:307.9px">15-Jan-2009</div>
<div class="gt" style="right:1143px;top:307.9px">0%</div>
<div class="a" style="left:227px;top:335.0px;width:14px;height:14px;border-radius:50%;border:1.6px solid #8d9fb3;background:radial-gradient(circle at 50% 50%,#c9ced4 0,#d6dadf 30%,#f4f6f8 55%,#e2e6ea 100%)"></div>
<div class="gt lnk" style="right:1612px;top:339.5px">16655</div>
<div class="a" style="left:405px;top:331.0px;width:10px;height:8px;border-left:1px dotted #7d99b5;border-bottom:1px dotted #7d99b5"></div>
<div class="a gt" style="left:425px;top:339.5px;width:55px;overflow:hidden">check documents</div>
<div class="gt" style="right:1345px;top:339.5px">15-Jan-2009</div>
<svg style="left:583px;top:337px" width="15" height="15"><g fill="none" stroke="#86a9c9" stroke-width="1.4"><rect x="0.7" y="2.2" width="13.6" height="12.1"/><path d="M3.5 0 V4.2 M11.5 0 V4.2 M3.5 7.5 H11.5 M3.5 10.5 H11.5"/></g></svg>
<svg style="left:695px;top:337px" width="15" height="15"><g fill="none" stroke="#86a9c9" stroke-width="1.4"><rect x="0.7" y="2.2" width="13.6" height="12.1"/><path d="M3.5 0 V4.2 M11.5 0 V4.2 M3.5 7.5 H11.5 M3.5 10.5 H11.5"/></g></svg>
<div class="gt" style="right:1143px;top:339.5px">100%</div>
<div class="a" style="left:227px;top:366.6px;width:14px;height:14px;border-radius:50%;border:1.6px solid #8d9fb3;background:radial-gradient(circle at 50% 50%,#c9ced4 0,#d6dadf 30%,#f4f6f8 55%,#e2e6ea 100%)"></div>
<div class="gt lnk" style="right:1612px;top:371.1px">9106</div>
<div class="gt" style="left:316px;top:371.1px">10</div>
<div class="a" style="left:383px;top:371.1px;width:9px;height:0;border-top:1px dotted #7d99b5"></div>
<div class="gt" style="left:402px;top:371.1px;width:78px;overflow:hidden">Fabrication and Delivery</div>
<div class="gt" style="right:1345px;top:371.1px">21-Jan-2009</div>
<svg style="left:583px;top:369px" width="15" height="15"><g fill="none" stroke="#86a9c9" stroke-width="1.4"><rect x="0.7" y="2.2" width="13.6" height="12.1"/><path d="M3.5 0 V4.2 M11.5 0 V4.2 M3.5 7.5 H11.5 M3.5 10.5 H11.5"/></g></svg>
<div class="gt" style="right:1233px;top:371.1px">04-Feb-2009</div>
<svg style="left:695px;top:369px" width="15" height="15"><g fill="none" stroke="#86a9c9" stroke-width="1.4"><rect x="0.7" y="2.2" width="13.6" height="12.1"/><path d="M3.5 0 V4.2 M11.5 0 V4.2 M3.5 7.5 H11.5 M3.5 10.5 H11.5"/></g></svg>
<div class="gt" style="right:1143px;top:371.1px">100%</div>
<div class="a" style="left:227px;top:398.2px;width:14px;height:14px;border-radius:50%;border:1.6px solid #8d9fb3;background:radial-gradient(circle at 50% 50%,#c9ced4 0,#d6dadf 30%,#f4f6f8 55%,#e2e6ea 100%)"></div>
<div class="gt lnk" style="right:1612px;top:402.7px">9107</div>
<div class="gt" style="left:316px;top:402.7px">11</div>
<div class="a" style="left:383px;top:402.7px;width:9px;height:0;border-top:1px dotted #7d99b5"></div>
<div class="gt" style="left:402px;top:402.7px;width:78px;overflow:hidden">Prepare and Issue</div>
<div class="gt" style="right:1345px;top:402.7px">21-Jan-2009</div>
<svg style="left:583px;top:401px" width="15" height="15"><g fill="none" stroke="#86a9c9" stroke-width="1.4"><rect x="0.7" y="2.2" width="13.6" height="12.1"/><path d="M3.5 0 V4.2 M11.5 0 V4.2 M3.5 7.5 H11.5 M3.5 10.5 H11.5"/></g></svg>
<div class="gt" style="right:1233px;top:402.7px">04-Feb-2009</div>
<svg style="left:695px;top:401px" width="15" height="15"><g fill="none" stroke="#86a9c9" stroke-width="1.4"><rect x="0.7" y="2.2" width="13.6" height="12.1"/><path d="M3.5 0 V4.2 M11.5 0 V4.2 M3.5 7.5 H11.5 M3.5 10.5 H11.5"/></g></svg>
<div class="gt" style="right:1143px;top:402.7px">100%</div>
<div class="a" style="left:227px;top:429.8px;width:14px;height:14px;border-radius:50%;border:1.6px solid #8d9fb3;background:radial-gradient(circle at 50% 50%,#c9ced4 0,#d6dadf 30%,#f4f6f8 55%,#e2e6ea 100%)"></div>
<div class="gt lnk" style="right:1612px;top:434.3px">9108</div>
<div class="gt" style="left:316px;top:434.3px">12</div>
<div class="a" style="left:383px;top:434.3px;width:9px;height:0;border-top:1px dotted #7d99b5"></div>
<div class="gt" style="left:402px;top:434.3px;width:78px;overflow:hidden">Review and Approve</div>
<div class="gt" style="right:1345px;top:434.3px">08-Feb-2009</div>
<svg style="left:583px;top:432px" width="15" height="15"><g fill="none" stroke="#86a9c9" stroke-width="1.4"><rect x="0.7" y="2.2" width="13.6" height="12.1"/><path d="M3.5 0 V4.2 M11.5 0 V4.2 M3.5 7.5 H11.5 M3.5 10.5 H11.5"/></g></svg>
<div class="gt" style="right:1233px;top:434.3px">22-Feb-2009</div>
<svg style="left:695px;top:432px" width="15" height="15"><g fill="none" stroke="#86a9c9" stroke-width="1.4"><rect x="0.7" y="2.2" width="13.6" height="12.1"/><path d="M3.5 0 V4.2 M11.5 0 V4.2 M3.5 7.5 H11.5 M3.5 10.5 H11.5"/></g></svg>
<div class="gt" style="right:1143px;top:434.3px">100%</div>
<div class="a" style="left:227px;top:461.3px;width:14px;height:14px;border-radius:50%;border:1.6px solid #8d9fb3;background:radial-gradient(circle at 50% 50%,#c9ced4 0,#d6dadf 30%,#f4f6f8 55%,#e2e6ea 100%)"></div>
<div class="gt lnk" style="right:1612px;top:465.8px">9109</div>
<div class="gt" style="left:316px;top:465.8px">13</div>
<div class="a" style="left:383px;top:465.8px;width:9px;height:0;border-top:1px dotted #7d99b5"></div>
<div class="gt" style="left:402px;top:465.8px;width:78px;overflow:hidden">Fabrication and Install</div>
<div class="gt" style="right:1345px;top:465.8px">23-Feb-2009</div>
<svg style="left:583px;top:464px" width="15" height="15"><g fill="none" stroke="#86a9c9" stroke-width="1.4"><rect x="0.7" y="2.2" width="13.6" height="12.1"/><path d="M3.5 0 V4.2 M11.5 0 V4.2 M3.5 7.5 H11.5 M3.5 10.5 H11.5"/></g></svg>
<div class="gt" style="right:1233px;top:465.8px">12-Mar-2009</div>
<svg style="left:695px;top:464px" width="15" height="15"><g fill="none" stroke="#86a9c9" stroke-width="1.4"><rect x="0.7" y="2.2" width="13.6" height="12.1"/><path d="M3.5 0 V4.2 M11.5 0 V4.2 M3.5 7.5 H11.5 M3.5 10.5 H11.5"/></g></svg>
<div class="gt" style="right:1143px;top:465.8px">48%</div>
<div class="a" style="left:227px;top:492.9px;width:14px;height:14px;border-radius:50%;border:1.6px solid #8d9fb3;background:radial-gradient(circle at 50% 50%,#c9ced4 0,#d6dadf 30%,#f4f6f8 55%,#e2e6ea 100%)"></div>
<div class="gt lnk" style="right:1612px;top:497.4px">9111</div>
<div class="gt" style="left:316px;top:497.4px">15</div>
<div class="a" style="left:383px;top:497.4px;width:9px;height:0;border-top:1px dotted #7d99b5"></div>
<div class="gt" style="left:402px;top:497.4px;width:78px;overflow:hidden">Layout Bldg Footprint</div>
<div class="gt" style="right:1345px;top:497.4px">16-Feb-2009</div>
<svg style="left:583px;top:495px" width="15" height="15"><g fill="none" stroke="#86a9c9" stroke-width="1.4"><rect x="0.7" y="2.2" width="13.6" height="12.1"/><path d="M3.5 0 V4.2 M11.5 0 V4.2 M3.5 7.5 H11.5 M3.5 10.5 H11.5"/></g></svg>
<div class="gt" style="right:1233px;top:497.4px">20-Feb-2009</div>
<svg style="left:695px;top:495px" width="15" height="15"><g fill="none" stroke="#86a9c9" stroke-width="1.4"><rect x="0.7" y="2.2" width="13.6" height="12.1"/><path d="M3.5 0 V4.2 M11.5 0 V4.2 M3.5 7.5 H11.5 M3.5 10.5 H11.5"/></g></svg>
<div class="gt" style="right:1143px;top:497.4px">100%</div>
<div class="a" style="left:227px;top:524.5px;width:14px;height:14px;border-radius:50%;border:1.6px solid #8d9fb3;background:radial-gradient(circle at 50% 50%,#c9ced4 0,#d6dadf 30%,#f4f6f8 55%,#e2e6ea 100%)"></div>
<div class="gt lnk" style="right:1612px;top:529.0px">9112</div>
<div class="gt" style="left:316px;top:529.0px">16</div>
<div class="a" style="left:383px;top:529.0px;width:9px;height:0;border-top:1px dotted #7d99b5"></div>
<div class="gt" style="left:402px;top:529.0px;width:78px;overflow:hidden">Excavate Bldg Footings</div>
<div class="gt" style="right:1345px;top:529.0px">28-Feb-2009</div>
<svg style="left:583px;top:527px" width="15" height="15"><g fill="none" stroke="#86a9c9" stroke-width="1.4"><rect x="0.7" y="2.2" width="13.6" height="12.1"/><path d="M3.5 0 V4.2 M11.5 0 V4.2 M3.5 7.5 H11.5 M3.5 10.5 H11.5"/></g></svg>
<div class="gt" style="right:1233px;top:529.0px">15-Mar-2009</div>
<svg style="left:695px;top:527px" width="15" height="15"><g fill="none" stroke="#86a9c9" stroke-width="1.4"><rect x="0.7" y="2.2" width="13.6" height="12.1"/><path d="M3.5 0 V4.2 M11.5 0 V4.2 M3.5 7.5 H11.5 M3.5 10.5 H11.5"/></g></svg>
<div class="gt" style="right:1143px;top:529.0px">100%</div>
<div class="a" style="left:227px;top:556.1px;width:14px;height:14px;border-radius:50%;border:1.6px solid #8d9fb3;background:radial-gradient(circle at 50% 50%,#c9ced4 0,#d6dadf 30%,#f4f6f8 55%,#e2e6ea 100%)"></div>
<div class="gt lnk" style="right:1612px;top:560.6px">9113</div>
<div class="gt" style="left:316px;top:560.6px">17</div>
<div class="a" style="left:383px;top:560.6px;width:9px;height:0;border-top:1px dotted #7d99b5"></div>
<div class="gt" style="left:402px;top:560.6px;width:78px;overflow:hidden">Form Footings</div>
<div class="gt" style="right:1345px;top:560.6px">08-Mar-2009</div>
<svg style="left:583px;top:559px" width="15" height="15"><g fill="none" stroke="#86a9c9" stroke-width="1.4"><rect x="0.7" y="2.2" width="13.6" height="12.1"/><path d="M3.5 0 V4.2 M11.5 0 V4.2 M3.5 7.5 H11.5 M3.5 10.5 H11.5"/></g></svg>
<div class="gt" style="right:1233px;top:560.6px">08-Apr-2009</div>
<svg style="left:695px;top:559px" width="15" height="15"><g fill="none" stroke="#86a9c9" stroke-width="1.4"><rect x="0.7" y="2.2" width="13.6" height="12.1"/><path d="M3.5 0 V4.2 M11.5 0 V4.2 M3.5 7.5 H11.5 M3.5 10.5 H11.5"/></g></svg>
<div class="gt" style="right:1143px;top:560.6px">70%</div>
<div class="a" style="left:227px;top:587.7px;width:14px;height:14px;border-radius:50%;border:1.6px solid #8d9fb3;background:radial-gradient(circle at 50% 50%,#c9ced4 0,#d6dadf 30%,#f4f6f8 55%,#e2e6ea 100%)"></div>
<div class="gt lnk" style="right:1612px;top:592.2px">9114</div>
<div class="gt" style="left:316px;top:592.2px">18</div>
<div class="a" style="left:383px;top:592.2px;width:9px;height:0;border-top:1px dotted #7d99b5"></div>
<div class="gt" style="left:402px;top:592.2px;width:78px;overflow:hidden">Rebar Footings</div>
<div class="gt" style="right:1345px;top:592.2px">06-Feb-2009</div>
<svg style="left:583px;top:590px" width="15" height="15"><g fill="none" stroke="#86a9c9" stroke-width="1.4"><rect x="0.7" y="2.2" width="13.6" height="12.1"/><path d="M3.5 0 V4.2 M11.5 0 V4.2 M3.5 7.5 H11.5 M3.5 10.5 H11.5"/></g></svg>
<div class="gt" style="right:1233px;top:592.2px">18-Feb-2009</div>
<svg style="left:695px;top:590px" width="15" height="15"><g fill="none" stroke="#86a9c9" stroke-width="1.4"><rect x="0.7" y="2.2" width="13.6" height="12.1"/><path d="M3.5 0 V4.2 M11.5 0 V4.2 M3.5 7.5 H11.5 M3.5 10.5 H11.5"/></g></svg>
<div class="gt" style="right:1143px;top:592.2px">30%</div>
<div class="a" style="left:227px;top:619.3px;width:14px;height:14px;border-radius:50%;border:1.6px solid #8d9fb3;background:radial-gradient(circle at 50% 50%,#c9ced4 0,#d6dadf 30%,#f4f6f8 55%,#e2e6ea 100%)"></div>
<div class="gt lnk" style="right:1612px;top:623.8px">9115</div>
<div class="gt" style="left:316px;top:623.8px">19</div>
<div class="a" style="left:383px;top:623.8px;width:9px;height:0;border-top:1px dotted #7d99b5"></div>
<div class="gt" style="left:402px;top:623.8px;width:78px;overflow:hidden">Pour Footings</div>
<div class="gt" style="right:1345px;top:623.8px">21-Feb-2009</div>
<svg style="left:583px;top:622px" width="15" height="15"><g fill="none" stroke="#86a9c9" stroke-width="1.4"><rect x="0.7" y="2.2" width="13.6" height="12.1"/><path d="M3.5 0 V4.2 M11.5 0 V4.2 M3.5 7.5 H11.5 M3.5 10.5 H11.5"/></g></svg>
<div class="gt" style="right:1233px;top:623.8px">02-Mar-2009</div>
<svg style="left:695px;top:622px" width="15" height="15"><g fill="none" stroke="#86a9c9" stroke-width="1.4"><rect x="0.7" y="2.2" width="13.6" height="12.1"/><path d="M3.5 0 V4.2 M11.5 0 V4.2 M3.5 7.5 H11.5 M3.5 10.5 H11.5"/></g></svg>
<div class="gt" style="right:1143px;top:623.8px">50%</div>
<div class="a" style="left:227px;top:650.9px;width:14px;height:14px;border-radius:50%;border:1.6px solid #8d9fb3;background:radial-gradient(circle at 50% 50%,#c9ced4 0,#d6dadf 30%,#f4f6f8 55%,#e2e6ea 100%)"></div>
<div class="gt lnk" style="right:1612px;top:655.4px">9117</div>
<div class="gt" style="left:316px;top:655.4px">20</div>
<div class="a" style="left:383px;top:655.4px;width:9px;height:0;border-top:1px dotted #7d99b5"></div>
<div class="gt" style="left:402px;top:655.4px;width:78px;overflow:hidden">Foundation Insulation</div>
<div class="gt" style="right:1345px;top:655.4px">03-Mar-2009</div>
<svg style="left:583px;top:653px" width="15" height="15"><g fill="none" stroke="#86a9c9" stroke-width="1.4"><rect x="0.7" y="2.2" width="13.6" height="12.1"/><path d="M3.5 0 V4.2 M11.5 0 V4.2 M3.5 7.5 H11.5 M3.5 10.5 H11.5"/></g></svg>
<div class="gt" style="right:1233px;top:655.4px">07-Mar-2009</div>
<svg style="left:695px;top:653px" width="15" height="15"><g fill="none" stroke="#86a9c9" stroke-width="1.4"><rect x="0.7" y="2.2" width="13.6" height="12.1"/><path d="M3.5 0 V4.2 M11.5 0 V4.2 M3.5 7.5 H11.5 M3.5 10.5 H11.5"/></g></svg>
<div class="gt" style="right:1143px;top:655.4px">25%</div>
<div class="a" style="left:227px;top:682.5px;width:14px;height:14px;border-radius:50%;border:1.6px solid #8d9fb3;background:radial-gradient(circle at 50% 50%,#c9ced4 0,#d6dadf 30%,#f4f6f8 55%,#e2e6ea 100%)"></div>
<div class="gt lnk" style="right:1612px;top:687.0px">9118</div>
<div class="gt" style="left:316px;top:687.0px">21</div>
<div class="a" style="left:383px;top:687.0px;width:9px;height:0;border-top:1px dotted #7d99b5"></div>
<div class="gt" style="left:402px;top:687.0px;width:78px;overflow:hidden">Backfill Foundation</div>
<div class="gt" style="right:1345px;top:687.0px">09-Mar-2009</div>
<svg style="left:583px;top:685px" width="15" height="15"><g fill="none" stroke="#86a9c9" stroke-width="1.4"><rect x="0.7" y="2.2" width="13.6" height="12.1"/><path d="M3.5 0 V4.2 M11.5 0 V4.2 M3.5 7.5 H11.5 M3.5 10.5 H11.5"/></g></svg>
<div class="gt" style="right:1233px;top:687.0px">18-Mar-2009</div>
<svg style="left:695px;top:685px" width="15" height="15"><g fill="none" stroke="#86a9c9" stroke-width="1.4"><rect x="0.7" y="2.2" width="13.6" height="12.1"/><path d="M3.5 0 V4.2 M11.5 0 V4.2 M3.5 7.5 H11.5 M3.5 10.5 H11.5"/></g></svg>
<div class="gt" style="right:1143px;top:687.0px">40%</div>
<div class="a" style="left:227px;top:714.1px;width:14px;height:14px;border-radius:50%;border:1.6px solid #8d9fb3;background:radial-gradient(circle at 50% 50%,#c9ced4 0,#d6dadf 30%,#f4f6f8 55%,#e2e6ea 100%)"></div>
<div class="gt lnk" style="right:1612px;top:718.6px">9119</div>
<div class="gt" style="left:316px;top:718.6px">22</div>
<div class="a" style="left:383px;top:718.6px;width:9px;height:0;border-top:1px dotted #7d99b5"></div>
<div class="gt" style="left:402px;top:718.6px;width:78px;overflow:hidden">Underground Utilities</div>
<div class="gt" style="right:1345px;top:718.6px">19-Mar-2009</div>
<svg style="left:583px;top:717px" width="15" height="15"><g fill="none" stroke="#86a9c9" stroke-width="1.4"><rect x="0.7" y="2.2" width="13.6" height="12.1"/><path d="M3.5 0 V4.2 M11.5 0 V4.2 M3.5 7.5 H11.5 M3.5 10.5 H11.5"/></g></svg>
<div class="gt" style="right:1233px;top:718.6px">28-Mar-2009</div>
<svg style="left:695px;top:717px" width="15" height="15"><g fill="none" stroke="#86a9c9" stroke-width="1.4"><rect x="0.7" y="2.2" width="13.6" height="12.1"/><path d="M3.5 0 V4.2 M11.5 0 V4.2 M3.5 7.5 H11.5 M3.5 10.5 H11.5"/></g></svg>
<div class="gt" style="right:1143px;top:718.6px">35%</div>
<div class="a" style="left:227px;top:745.7px;width:14px;height:14px;border-radius:50%;border:1.6px solid #8d9fb3;background:radial-gradient(circle at 50% 50%,#c9ced4 0,#d6dadf 30%,#f4f6f8 55%,#e2e6ea 100%)"></div>
<div class="gt lnk" style="right:1612px;top:750.2px">9120</div>
<div class="gt" style="left:316px;top:750.2px">23</div>
<div class="a" style="left:383px;top:750.2px;width:9px;height:0;border-top:1px dotted #7d99b5"></div>
<div class="gt" style="left:402px;top:750.2px;width:78px;overflow:hidden">Gravel SOG</div>
<div class="gt" style="right:1345px;top:750.2px">29-Mar-2009</div>
<svg style="left:583px;top:748px" width="15" height="15"><g fill="none" stroke="#86a9c9" stroke-width="1.4"><rect x="0.7" y="2.2" width="13.6" height="12.1"/><path d="M3.5 0 V4.2 M11.5 0 V4.2 M3.5 7.5 H11.5 M3.5 10.5 H11.5"/></g></svg>
<div class="gt" style="right:1233px;top:750.2px">26-Apr-2009</div>
<svg style="left:695px;top:748px" width="15" height="15"><g fill="none" stroke="#86a9c9" stroke-width="1.4"><rect x="0.7" y="2.2" width="13.6" height="12.1"/><path d="M3.5 0 V4.2 M11.5 0 V4.2 M3.5 7.5 H11.5 M3.5 10.5 H11.5"/></g></svg>
<div class="gt" style="right:1143px;top:750.2px">40%</div>
<div class="a" style="left:227px;top:777.2px;width:14px;height:14px;border-radius:50%;border:1.6px solid #8d9fb3;background:radial-gradient(circle at 50% 50%,#c9ced4 0,#d6dadf 30%,#f4f6f8 55%,#e2e6ea 100%)"></div>
<div class="gt lnk" style="right:1612px;top:781.8px">9121</div>
<div class="gt" style="left:316px;top:781.8px">24</div>
<div class="a" style="left:383px;top:781.8px;width:9px;height:0;border-top:1px dotted #7d99b5"></div>
<div class="gt" style="left:402px;top:781.8px;width:78px;overflow:hidden">Form Place Walls</div>
<div class="gt" style="right:1345px;top:781.8px">27-Apr-2009</div>
<svg style="left:583px;top:780px" width="15" height="15"><g fill="none" stroke="#86a9c9" stroke-width="1.4"><rect x="0.7" y="2.2" width="13.6" height="12.1"/><path d="M3.5 0 V4.2 M11.5 0 V4.2 M3.5 7.5 H11.5 M3.5 10.5 H11.5"/></g></svg>
<div class="gt" style="right:1233px;top:781.8px">05-Jun-2009</div>
<svg style="left:695px;top:780px" width="15" height="15"><g fill="none" stroke="#86a9c9" stroke-width="1.4"><rect x="0.7" y="2.2" width="13.6" height="12.1"/><path d="M3.5 0 V4.2 M11.5 0 V4.2 M3.5 7.5 H11.5 M3.5 10.5 H11.5"/></g></svg>
<div class="gt" style="right:1143px;top:781.8px">50%</div>
<div class="a" style="left:227px;top:808.8px;width:14px;height:14px;border-radius:50%;border:1.6px solid #8d9fb3;background:radial-gradient(circle at 50% 50%,#c9ced4 0,#d6dadf 30%,#f4f6f8 55%,#e2e6ea 100%)"></div>
<div class="gt lnk" style="right:1612px;top:813.3px">9122</div>
<div class="gt" style="left:316px;top:813.3px">25</div>
<div class="a" style="left:383px;top:813.3px;width:9px;height:0;border-top:1px dotted #7d99b5"></div>
<div class="gt" style="left:402px;top:813.3px;width:78px;overflow:hidden">Pour SOG</div>
<div class="gt" style="right:1345px;top:813.3px">06-Jun-2009</div>
<svg style="left:583px;top:811px" width="15" height="15"><g fill="none" stroke="#86a9c9" stroke-width="1.4"><rect x="0.7" y="2.2" width="13.6" height="12.1"/><path d="M3.5 0 V4.2 M11.5 0 V4.2 M3.5 7.5 H11.5 M3.5 10.5 H11.5"/></g></svg>
<div class="gt" style="right:1233px;top:813.3px">20-Jun-2009</div>
<svg style="left:695px;top:811px" width="15" height="15"><g fill="none" stroke="#86a9c9" stroke-width="1.4"><rect x="0.7" y="2.2" width="13.6" height="12.1"/><path d="M3.5 0 V4.2 M11.5 0 V4.2 M3.5 7.5 H11.5 M3.5 10.5 H11.5"/></g></svg>
<div class="gt" style="right:1143px;top:813.3px">20%</div>
<div class="a" style="left:227px;top:840.4px;width:14px;height:14px;border-radius:50%;border:1.6px solid #8d9fb3;background:radial-gradient(circle at 50% 50%,#c9ced4 0,#d6dadf 30%,#f4f6f8 55%,#e2e6ea 100%)"></div>
<div class="gt lnk" style="right:1612px;top:844.9px">9123</div>
<div class="gt" style="left:316px;top:844.9px">26</div>
<div class="a" style="left:383px;top:844.9px;width:9px;height:0;border-top:1px dotted #7d99b5"></div>
<div class="gt" style="left:402px;top:844.9px;width:78px;overflow:hidden">Rough Electrical</div>
<div class="gt" style="right:1345px;top:844.9px">29-Mar-2009</div>
<svg style="left:583px;top:843px" width="15" height="15"><g fill="none" stroke="#86a9c9" stroke-width="1.4"><rect x="0.7" y="2.2" width="13.6" height="12.1"/><path d="M3.5 0 V4.2 M11.5 0 V4.2 M3.5 7.5 H11.5 M3.5 10.5 H11.5"/></g></svg>
<div class="gt" style="right:1233px;top:844.9px">17-Apr-2009</div>
<svg style="left:695px;top:843px" width="15" height="15"><g fill="none" stroke="#86a9c9" stroke-width="1.4"><rect x="0.7" y="2.2" width="13.6" height="12.1"/><path d="M3.5 0 V4.2 M11.5 0 V4.2 M3.5 7.5 H11.5 M3.5 10.5 H11.5"/></g></svg>
<div class="gt" style="right:1143px;top:844.9px">20%</div>
<div class="a" style="left:227px;top:872.0px;width:14px;height:14px;border-radius:50%;border:1.6px solid #8d9fb3;background:radial-gradient(circle at 50% 50%,#c9ced4 0,#d6dadf 30%,#f4f6f8 55%,#e2e6ea 100%)"></div>
<div class="gt lnk" style="right:1612px;top:876.5px">9124</div>
<div class="gt" style="left:316px;top:876.5px">27</div>
<div class="a" style="left:383px;top:876.5px;width:9px;height:0;border-top:1px dotted #7d99b5"></div>
<div class="gt" style="left:402px;top:876.5px;width:78px;overflow:hidden">Masonry Veneer</div>
<div class="gt" style="right:1345px;top:876.5px">04-Jun-2009</div>
<svg style="left:583px;top:875px" width="15" height="15"><g fill="none" stroke="#86a9c9" stroke-width="1.4"><rect x="0.7" y="2.2" width="13.6" height="12.1"/><path d="M3.5 0 V4.2 M11.5 0 V4.2 M3.5 7.5 H11.5 M3.5 10.5 H11.5"/></g></svg>
<div class="gt" style="right:1233px;top:876.5px">23-Jun-2009</div>
<svg style="left:695px;top:875px" width="15" height="15"><g fill="none" stroke="#86a9c9" stroke-width="1.4"><rect x="0.7" y="2.2" width="13.6" height="12.1"/><path d="M3.5 0 V4.2 M11.5 0 V4.2 M3.5 7.5 H11.5 M3.5 10.5 H11.5"/></g></svg>
<div class="gt" style="right:1143px;top:876.5px">28%</div>
<div class="a" style="left:227px;top:903.6px;width:14px;height:14px;border-radius:50%;border:1.6px solid #8d9fb3;background:radial-gradient(circle at 50% 50%,#c9ced4 0,#d6dadf 30%,#f4f6f8 55%,#e2e6ea 100%)"></div>
<div class="gt lnk" style="right:1612px;top:908.1px">9125</div>
<div class="gt" style="left:316px;top:908.1px">28</div>
<div class="a" style="left:383px;top:908.1px;width:9px;height:0;border-top:1px dotted #7d99b5"></div>
<div class="gt" style="left:402px;top:908.1px;width:78px;overflow:hidden">Joint Sealant</div>
<div class="gt" style="right:1345px;top:908.1px">01-Jul-2009</div>
<svg style="left:583px;top:906px" width="15" height="15"><g fill="none" stroke="#86a9c9" stroke-width="1.4"><rect x="0.7" y="2.2" width="13.6" height="12.1"/><path d="M3.5 0 V4.2 M11.5 0 V4.2 M3.5 7.5 H11.5 M3.5 10.5 H11.5"/></g></svg>
<div class="gt" style="right:1233px;top:908.1px">31-Jul-2009</div>
<svg style="left:695px;top:906px" width="15" height="15"><g fill="none" stroke="#86a9c9" stroke-width="1.4"><rect x="0.7" y="2.2" width="13.6" height="12.1"/><path d="M3.5 0 V4.2 M11.5 0 V4.2 M3.5 7.5 H11.5 M3.5 10.5 H11.5"/></g></svg>
<div class="gt" style="right:1143px;top:908.1px">45%</div>
<div class="a" style="left:227px;top:935.2px;width:14px;height:14px;border-radius:50%;border:1.6px solid #8d9fb3;background:radial-gradient(circle at 50% 50%,#c9ced4 0,#d6dadf 30%,#f4f6f8 55%,#e2e6ea 100%)"></div>
<div class="gt lnk" style="right:1612px;top:939.7px">9126</div>
<div class="gt" style="left:316px;top:939.7px">29</div>
<div class="a" style="left:383px;top:939.7px;width:9px;height:0;border-top:1px dotted #7d99b5"></div>
<div class="gt" style="left:402px;top:939.7px;width:78px;overflow:hidden">Windows</div>
<div class="gt" style="right:1345px;top:939.7px">26-Aug-2009</div>
<svg style="left:583px;top:938px" width="15" height="15"><g fill="none" stroke="#86a9c9" stroke-width="1.4"><rect x="0.7" y="2.2" width="13.6" height="12.1"/><path d="M3.5 0 V4.2 M11.5 0 V4.2 M3.5 7.5 H11.5 M3.5 10.5 H11.5"/></g></svg>
<div class="gt" style="right:1233px;top:939.7px">14-Sep-2009</div>
<svg style="left:695px;top:938px" width="15" height="15"><g fill="none" stroke="#86a9c9" stroke-width="1.4"><rect x="0.7" y="2.2" width="13.6" height="12.1"/><path d="M3.5 0 V4.2 M11.5 0 V4.2 M3.5 7.5 H11.5 M3.5 10.5 H11.5"/></g></svg>
<div class="gt" style="right:1143px;top:939.7px">0%</div>
<div class="a" style="left:225px;top:959px;width:255px;height:26px;background:#fff"></div>
<div class="a" style="left:488px;top:960px;width:331px;height:25px;background:#f0f0f0"></div><div class="a" style="left:514px;top:962px;width:111px;height:21px;background:#c1c1c1"></div><svg style="left:497px;top:967px" width="8" height="11"><path d="M7 0.5 V10.5 L1.5 5.5 Z" fill="#a3a3a3"/></svg><svg style="left:803px;top:967px" width="8" height="11"><path d="M1 0.5 V10.5 L6.5 5.5 Z" fill="#505050"/></svg>
<div class="a" style="left:826px;top:960px;width:1040px;height:25px;background:#f0f0f0"></div><div class="a" style="left:853px;top:962px;width:627px;height:21px;background:#c1c1c1"></div><svg style="left:835px;top:967px" width="8" height="11"><path d="M7 0.5 V10.5 L1.5 5.5 Z" fill="#a3a3a3"/></svg><svg style="left:1850px;top:967px" width="8" height="11"><path d="M1 0.5 V10.5 L6.5 5.5 Z" fill="#505050"/></svg>
<div class="a" style="left:1868px;top:226px;width:24px;height:733px;background:#f0f0f0"></div>
<div class="a" style="left:1871px;top:252px;width:20px;height:339px;background:#c1c1c1"></div>
<svg style="left:1875px;top:236px" width="14" height="8"><path d="M0.5 7 H13 L6.75 0.5 Z" fill="#a3a3a3"/></svg>
<svg style="left:1875px;top:941px" width="14" height="8"><path d="M0.5 0.5 H13 L6.75 7 Z" fill="#505050"/></svg>
<div class="a" style="left:1866px;top:960px;width:28px;height:25px;background:#fff"></div>
<div class="a" style="left:225px;top:985px;width:1669px;height:29px;background:#f7f7f7;border-bottom:1px solid #e3e3e3"></div>
<div class="a" style="left:292px;top:989px;width:77px;height:23px;border:1px solid #7d95ab;border-radius:5px;background:#fff"></div>
<div class="gt" style="left:316px;top:995px;color:#222">1 / 5</div>
<svg style="left:235px;top:990px" width="200" height="20"><g fill="none" stroke-width="1.3">
<path d="M4 4.5 V13.5 M12 4.5 L7.5 9 L12 13.5" stroke="#d5d5d5"/>
<path d="M38 4.5 L33.5 9 L38 13.5 M45 4.5 L40.5 9 L45 13.5" stroke="#d5d5d5"/>
<path d="M146 4.5 L150.5 9 L146 13.5 M152.5 4.5 L157 9 L152.5 13.5" stroke="#7a9ac4"/>
<path d="M177 4.5 L181.5 9 L177 13.5 M184.5 4.5 V13.5" stroke="#7a9ac4"/>
</g></svg>
<svg style="left:1876px;top:997px" width="18" height="18"><path d="M17 4 L4 17 M17 8 L8 17 M17 12 L12 17" stroke="#555" stroke-width="1.2"/></svg>
<div class="a" style="left:225px;top:1041px;width:1670px;height:1px;background:#8c8c8c"></div>
<div class="a" style="left:410px;top:1042px;width:1485px;height:4px;background:#ececec;border-left:1px solid #888"></div>
<div class="a" style="left:225px;top:1044px;width:185px;height:1px;background:#999"></div>
<div class="a" style="left:1895px;top:0;width:25px;height:1046px;background:#f1f1f1"></div>
<div class="a" style="left:1897px;top:25px;width:21px;height:715px;background:#c1c1c1"></div>
<svg style="left:1902px;top:9px" width="12" height="8"><path d="M0.5 7 H11 L5.75 0.5 Z" fill="#a3a3a3"/></svg>
<div class="t" style="left:841.9px;width:40px;text-align:center;top:249px;font-size:13px;font-weight:bold;color:#f2f8fd">01</div>
<div class="a" style="left:896.2px;top:247px;width:1px;height:16px;background:#e9f3fb"></div>
<div class="t" style="left:908.2px;width:40px;text-align:center;top:249px;font-size:13px;font-weight:bold;color:#f2f8fd">02</div>
<div class="a" style="left:959.2px;top:247px;width:1px;height:16px;background:#e9f3fb"></div>
<div class="t" style="left:974.6px;width:40px;text-align:center;top:249px;font-size:13px;font-weight:bold;color:#f2f8fd">03</div>
<div class="a" style="left:1028.9px;top:247px;width:1px;height:16px;background:#e9f3fb"></div>
<div class="t" style="left:1043.1px;width:40px;text-align:center;top:249px;font-size:13px;font-weight:bold;color:#f2f8fd">04</div>
<div class="a" style="left:1096.4px;top:247px;width:1px;height:16px;background:#e9f3fb"></div>
<div class="t" style="left:1111.7px;width:40px;text-align:center;top:249px;font-size:13px;font-weight:bold;color:#f2f8fd">05</div>
<div class="a" style="left:1166.1px;top:247px;width:1px;height:16px;background:#e9f3fb"></div>
<div class="t" style="left:1180.3px;width:40px;text-align:center;top:249px;font-size:13px;font-weight:bold;color:#f2f8fd">06</div>
<div class="a" style="left:1233.6px;top:231px;width:1px;height:33px;background:#e9f3fb"></div>
<div class="t" style="left:1248.9px;width:40px;text-align:center;top:249px;font-size:13px;font-weight:bold;color:#f2f8fd">07</div>
<div class="a" style="left:1303.3px;top:247px;width:1px;height:16px;background:#e9f3fb"></div>
<div class="t" style="left:1318.6px;width:40px;text-align:center;top:249px;font-size:13px;font-weight:bold;color:#f2f8fd">08</div>
<div class="a" style="left:1373.0px;top:247px;width:1px;height:16px;background:#e9f3fb"></div>
<div class="t" style="left:1387.2px;width:40px;text-align:center;top:249px;font-size:13px;font-weight:bold;color:#f2f8fd">09</div>
<div class="a" style="left:1440.5px;top:247px;width:1px;height:16px;background:#e9f3fb"></div>
<div class="t" style="left:1455.8px;width:40px;text-align:center;top:249px;font-size:13px;font-weight:bold;color:#f2f8fd">10</div>
<div class="a" style="left:1510.2px;top:247px;width:1px;height:16px;background:#e9f3fb"></div>
<div class="t" style="left:1524.4px;width:40px;text-align:center;top:249px;font-size:13px;font-weight:bold;color:#f2f8fd">11</div>
<div class="a" style="left:1577.7px;top:247px;width:1px;height:16px;background:#e9f3fb"></div>
<div class="t" style="left:1593.0px;width:40px;text-align:center;top:249px;font-size:13px;font-weight:bold;color:#f2f8fd">12</div>
<div class="a" style="left:1647.4px;top:231px;width:1px;height:33px;background:#e9f3fb"></div>
<div class="t" style="left:1662.7px;width:40px;text-align:center;top:249px;font-size:13px;font-weight:bold;color:#f2f8fd">01</div>
<div class="a" style="left:1717.1px;top:247px;width:1px;height:16px;background:#e9f3fb"></div>
<div class="t" style="left:1729.1px;width:40px;text-align:center;top:249px;font-size:13px;font-weight:bold;color:#f2f8fd">02</div>
<div class="a" style="left:1780.1px;top:247px;width:1px;height:16px;background:#e9f3fb"></div>
<div class="t" style="left:1795.4px;width:40px;text-align:center;top:249px;font-size:13px;font-weight:bold;color:#f2f8fd">03</div>
<div class="a" style="left:1849.8px;top:247px;width:1px;height:16px;background:#e9f3fb"></div>
<div class="t" style="left:1010px;top:233px;font-size:13px;font-weight:bold;color:#f2f8fd">I. 2009</div>
<div class="t" style="left:1419px;top:233px;font-size:13px;font-weight:bold;color:#f2f8fd">II. 2009</div>
<div class="a" style="left:1826px;top:226px;width:42px;height:40px;overflow:hidden"><div class="t" style="left:6px;top:7px;font-size:13px;font-weight:bold;color:#f2f8fd">I. 2010</div></div>
<div class="a" style="left:826px;top:266px;width:1042px;height:693px;background:#fff"></div>
<div class="a" style="left:830px;top:298.40px;width:1038px;height:1px;background:#dcdcdc"></div>
<div class="a" style="left:831px;top:645.89px;width:1037px;height:1px;background:#d0d0d8"></div>
<div class="a" style="left:831px;top:835.43px;width:1037px;height:1px;background:#d0d0d8"></div>
<div class="a" style="left:831px;top:867.02px;width:1037px;height:1px;background:#d0d0d8"></div>
<div class="a" style="left:1233.6px;top:298.4px;width:1px;height:660.6px;background:#e2e2e2"></div>
<div class="a" style="left:829px;top:298.4px;width:1.2px;height:660.6px;background:#e8b64a"></div>
<div class="a" style="left:1647px;top:298.4px;width:1.3px;height:660.6px;background:#d9a43c"></div>
<div class="a" style="left:859.8px;top:298.4px;width:1.2px;height:660.6px;background:#a8323a"></div>
<svg style="left:851.5px;top:307.9px" width="14" height="14"><path d="M7 0.5 L13.5 7 L7 13.5 L0.5 7 Z" fill="#555"/></svg>
<div class="t" style="left:871.5px;top:309.2px;font-size:11px;color:#111">Joe Smith</div>
<svg style="left:851.5px;top:339.5px" width="14" height="14"><path d="M7 0.5 L13.5 7 L7 13.5 L0.5 7 Z" fill="#22b522"/></svg>
<div class="a" style="left:873.0px;top:370.1px;width:31.7px;height:14px;border:1.3px solid #226d2b;background:#c6ddc6"></div>
<div class="t" style="left:914.0px;top:371.9px;font-size:11px;color:#111">Joe Smith</div>
<div class="a" style="left:873.0px;top:401.7px;width:31.7px;height:14px;border:1.3px solid #226d2b;background:#c6ddc6"></div>
<div class="a" style="left:913.5px;top:433.3px;width:31.7px;height:14px;border:1.3px solid #226d2b;background:#c6ddc6"></div>
<div class="a" style="left:947.2px;top:464.8px;width:38.4px;height:14px;border:1.3px solid #24557f;background:linear-gradient(90deg,#72d86d 0,#72d86d 19.4px,#5aafe8 19.4px,#5aafe8 100%);box-shadow:inset 0 -1px 0 rgba(255,255,255,0.85)"></div>
<div class="a" style="left:931.5px;top:496.4px;width:9.2px;height:14px;border:1.3px solid #226d2b;background:#c6ddc6"></div>
<div class="a" style="left:958.4px;top:528.0px;width:33.9px;height:14px;border:1.3px solid #226d2b;background:#c6ddc6"></div>
<div class="a" style="left:976.4px;top:559.6px;width:69.9px;height:14px;border:1.3px solid #24557f;background:linear-gradient(90deg,#72d86d 0,#72d86d 49.9px,#5aafe8 49.9px,#5aafe8 100%);box-shadow:inset 0 -1px 0 rgba(255,255,255,0.85)"></div>
<div class="a" style="left:909.0px;top:591.2px;width:27.2px;height:14px;border:1.3px solid #24557f;background:linear-gradient(90deg,#72d86d 0,#72d86d 9.2px,#5aafe8 9.2px,#5aafe8 100%);box-shadow:inset 0 -1px 0 rgba(255,255,255,0.85)"></div>
<div class="a" style="left:942.7px;top:622.8px;width:20.4px;height:14px;border:1.3px solid #24557f;background:linear-gradient(90deg,#72d86d 0,#72d86d 11.2px,#5aafe8 11.2px,#5aafe8 100%);box-shadow:inset 0 -1px 0 rgba(255,255,255,0.85)"></div>
<div class="a" style="left:965.2px;top:654.4px;width:9.2px;height:14px;border:1.3px solid #24557f;background:linear-gradient(90deg,#72d86d 0,#72d86d 3.3px,#5aafe8 3.3px,#5aafe8 100%);box-shadow:inset 0 -1px 0 rgba(255,255,255,0.85)"></div>
<div class="a" style="left:978.7px;top:686.0px;width:20.4px;height:14px;border:1.3px solid #24557f;background:linear-gradient(90deg,#72d86d 0,#72d86d 9.2px,#5aafe8 9.2px,#5aafe8 100%);box-shadow:inset 0 -1px 0 rgba(255,255,255,0.85)"></div>
<div class="a" style="left:1001.2px;top:717.6px;width:20.4px;height:14px;border:1.3px solid #24557f;background:linear-gradient(90deg,#72d86d 0,#72d86d 8.2px,#5aafe8 8.2px,#5aafe8 100%);box-shadow:inset 0 -1px 0 rgba(255,255,255,0.85)"></div>
<div class="a" style="left:1023.7px;top:749.2px;width:63.2px;height:14px;border:1.3px solid #24557f;background:linear-gradient(90deg,#72d86d 0,#72d86d 26.3px,#5aafe8 26.3px,#5aafe8 100%);box-shadow:inset 0 -1px 0 rgba(255,255,255,0.85)"></div>
<div class="a" style="left:1088.9px;top:780.7px;width:87.9px;height:14px;border:1.3px solid #24557f;background:linear-gradient(90deg,#72d86d 0,#72d86d 45.0px,#5aafe8 45.0px,#5aafe8 100%);box-shadow:inset 0 -1px 0 rgba(255,255,255,0.85)"></div>
<div class="t" style="left:1186.1px;top:782.5px;font-size:11px;color:#111">Dan Brown</div>
<div class="a" style="left:1178.8px;top:812.3px;width:31.7px;height:14px;border:1.3px solid #24557f;background:linear-gradient(90deg,#72d86d 0,#72d86d 7.3px,#5aafe8 7.3px,#5aafe8 100%);box-shadow:inset 0 -1px 0 rgba(255,255,255,0.85)"></div>
<div class="a" style="left:1023.7px;top:843.9px;width:42.9px;height:14px;border:1.3px solid #24557f;background:linear-gradient(90deg,#72d86d 0,#72d86d 9.6px,#5aafe8 9.6px,#5aafe8 100%);box-shadow:inset 0 -1px 0 rgba(255,255,255,0.85)"></div>
<div class="a" style="left:1174.3px;top:875.5px;width:42.9px;height:14px;border:1.3px solid #24557f;background:linear-gradient(90deg,#72d86d 0,#72d86d 13.0px,#5aafe8 13.0px,#5aafe8 100%);box-shadow:inset 0 -1px 0 rgba(255,255,255,0.85)"></div>
<div class="a" style="left:1235.1px;top:907.1px;width:67.7px;height:14px;border:1.3px solid #24557f;background:linear-gradient(90deg,#72d86d 0,#72d86d 31.5px,#5aafe8 31.5px,#5aafe8 100%);box-shadow:inset 0 -1px 0 rgba(255,255,255,0.85)"></div>
<div class="a" style="left:1361.0px;top:938.7px;width:42.9px;height:14px;border:1.3px solid #3f6f9a;background:#a9d0ee"></div>
</body></html>
